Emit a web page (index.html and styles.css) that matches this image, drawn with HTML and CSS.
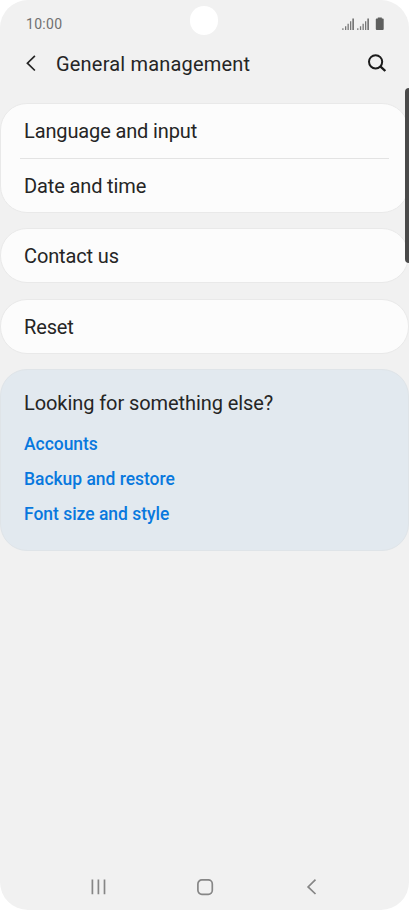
FILE: index.html
```html
<!DOCTYPE html>
<html lang="en">
<head>
<meta charset="utf-8">
<title>General management</title>
<link rel="stylesheet" href="styles.css">
</head>
<body>
<div class="phone">
  <div class="camera"></div>
  <div class="edge-panel"></div>
  <header class="status">
    <span class="time">10:00</span>
    <svg class="status-icons" width="44" height="14" viewBox="0 0 44 14">
      <g fill="#777">
        <path d="M.3 10.200h1.200v1.800H.3zM3 8.300h1.300V12H3zM5.500 5.700h1.300V12H5.500zM8 3.200h1.300V12H8zM10.300.4h1.700V12h-1.700z"/>
        <path d="M15.200 10.200h1.200v1.800h-1.200zM17.900 8.300h1.300V12h-1.300zM20.500 5.700h1.300V12h-1.300zM23 3.200h1.300V12H23zM25.300.4h1.700V12h-1.700z"/>
      </g>
      <path fill="#5e5f5e" d="M35.800-.6h4v1h1.100a.8.8 0 0 1 .8.800V11a1 1 0 0 1-1 1h-5.900a1 1 0 0 1-1-1V1.200a.8.8 0 0 1 .8-.8h1.200z"/>
    </svg>
  </header>
  <div class="title-bar">
    <svg class="back" width="12" height="18" viewBox="0 0 12 18"><path d="M9.900 1.800 2.400 9.200l7.500 7.300" fill="none" stroke="#252525" stroke-width="1.700"/></svg>
    <h1>General management</h1>
    <svg class="search" width="20" height="20" viewBox="0 0 20 20" fill="none" stroke="#1c1c1c"><circle cx="8.600" cy="7.800" r="6.600" stroke-width="2"/><path d="m13.300 12.300 5 4.700" stroke-width="2.400"/></svg>
  </div>
  <main>
    <section class="card double">
      <div class="row">Language and input</div>
      <div class="row second">Date and time</div>
    </section>
    <section class="card single"><div class="row">Contact us</div></section>
    <section class="card single"><div class="row">Reset</div></section>
    <section class="card related">
      <h2>Looking for something else?</h2>
      <a>Accounts</a>
      <a>Backup and restore</a>
      <a>Font size and style</a>
    </section>
  </main>
  <nav>
    <svg width="16" height="18" viewBox="0 0 16 18"><path d="M2.400 1.500v14.800M8.400 1.500v14.800M14.500 1.500v14.800" stroke="#868686" stroke-width="1.700"/></svg>
    <svg width="18" height="18" viewBox="0 0 18 18"><rect x="0.900" y="1.900" width="14.400" height="14.400" rx="4" fill="none" stroke="#868686" stroke-width="1.700"/></svg>
    <svg width="12" height="18" viewBox="0 0 12 18"><path d="M9.500 1.700 2.100 8.900l7.400 7.100" fill="none" stroke="#868686" stroke-width="1.700"/></svg>
  </nav>
</div>
</body>
</html>
```

FILE: styles.css
```css
* { box-sizing: border-box; }
body { margin: 0; background: #fff; font-family: Roboto, sans-serif; color: #252525; }
svg { display: block; overflow: visible; }
h1, h2 { margin: 0; font-weight: 400; font-size: 20px; }
.phone { position: relative; width: 409px; height: 910px; background: #f1f1f1; border-radius: 28px; overflow: hidden; display: flex; flex-direction: column; }
.camera { position: absolute; left: 189.700px; top: 6px; width: 28.500px; height: 28.500px; border-radius: 50%; background: #fff; }
.edge-panel { position: absolute; z-index: 1; left: 405px; top: 88px; width: 8px; height: 175px; border-radius: 4px; background: #4a4a4a; }
.status { height: 40px; padding: 0 23px 0 26px; display: flex; justify-content: space-between; }
.time { margin-top: 15px; font-size: 14px; line-height: 19px; color: #707070; letter-spacing: .3px; }
.status-icons { margin-top: 18px; }
.title-bar { height: 63px; padding: 10px 22px 0 25px; display: flex; align-items: flex-start; }
.back { margin-top: 4px; }
.title-bar h1 { margin-left: 19px; line-height: 28px; letter-spacing: .19px; }
.search { margin: 4px 0 0 auto; }
main { flex: 1; display: flex; flex-direction: column; gap: 15.500px; }
.card { background: #fcfcfc; border: 1px solid #e9e9e9; border-radius: 27px; padding: 0 19px; }
.double { height: 109.500px; }
.single { height: 55px; }
.row { height: 54px; padding: 0 4px; line-height: 55px; font-size: 20px; letter-spacing: -.13px; }
.second { border-top: 1px solid #e3e3e3; }
.related { height: 182px; padding: 19px 23px 0; background: #e2e9ef; border-color: #dfe4e8; }
.related h2 { line-height: 28px; margin-bottom: 10px; letter-spacing: -.08px; }
.related a { display: block; height: 35px; line-height: 35px; font-size: 17.450px; font-weight: 500; color: #0878de; }
nav { height: 32px; padding: 0 91px 0 90px; display: flex; justify-content: space-between; }
```
